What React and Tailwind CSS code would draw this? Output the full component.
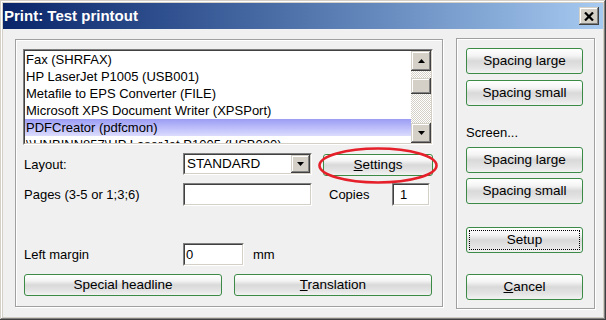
import React from 'react'

const printers = [
  'Fax (SHRFAX)',
  'HP LaserJet P1005 (USB001)',
  'Metafile to EPS Converter (FILE)',
  'Microsoft XPS Document Writer (XPSPort)',
  'PDFCreator (pdfcmon)',
  '\\\\UNBINN857\\HP LaserJet P1005 (USB000)',
]

function Btn({ children, className = '', focus }) {
  return (
    <div
      className={
        'relative flex items-center justify-center rounded-[3px] border border-[#3b8a45] bg-[linear-gradient(#ffffff_0%,#f4f4f4_28%,#d9d9d9_50%,#e4e4e4_78%,#f2f2f2_100%)] text-black text-[13.5px] ' +
        className
      }
    >
      {focus && <div className="absolute inset-[2px] border border-dotted border-black" />}
      <span className="relative">{children}</span>
    </div>
  )
}

function Sunken({ className = '', children }) {
  return (
    <div className={'flex border border-t-[#808080] border-l-[#808080] border-b-white border-r-white ' + className}>
      <div className="flex flex-1 min-w-0 border border-t-[#404040] border-l-[#404040] border-b-[#d4d0c8] border-r-[#d4d0c8] bg-white">
        {children}
      </div>
    </div>
  )
}

function Arrow({ down }) {
  return (
    <svg width="7" height="4" viewBox="0 0 7 4">
      <path d={down ? 'M0 0H7L3.5 4Z' : 'M0 4H7L3.5 0Z'} fill="#000" />
    </svg>
  )
}

const raised =
  'bg-[#d4d0c8] shadow-[inset_-1px_-1px_0_#404040,inset_1px_1px_0_#d4d0c8,inset_-2px_-2px_0_#808080,inset_2px_2px_0_#fff]'

export default function App() {
  return (
    <div className="w-[606px] h-[320px] overflow-hidden flex flex-col p-[3px] bg-[#d4d0c8] shadow-[inset_-1px_-1px_0_#404040,inset_1px_1px_0_#d4d0c8,inset_-2px_-2px_0_#808080,inset_2px_2px_0_#fff] font-['Liberation_Sans',Arial,sans-serif] text-[13px] text-black">
      {/* title bar */}
      <div className="h-[26px] shrink-0 flex items-center pl-[1px] pr-[4px] bg-gradient-to-r from-[#0a246a] to-[#a6caf0]">
        <span className="text-white font-bold text-[15px]">Print: Test printout</span>
        <div className={'ml-auto w-[20px] h-[18px] flex items-center justify-center ' + raised}>
          <svg width="10" height="9" viewBox="0 0 10 9">
            <path d="M1 0.5L9 8.5M9 0.5L1 8.5" stroke="#000" strokeWidth="2.2" />
          </svg>
        </div>
      </div>

      <div className="flex-1 flex bg-[#f0f0f0] pl-[12px] pr-[8px]">
        {/* left group */}
        <div className="mt-[10px] w-[428px] h-[268px] flex flex-col pl-[7px] pt-[9px] border border-[#a0a0a0] shadow-[inset_1px_1px_0_#fff,1px_1px_0_#fff]">
          <Sunken className="w-[410px] h-[96px]">
            <div className="flex-1 overflow-hidden">
              {printers.map((p, i) => (
                <div
                  key={p}
                  className={
                    'h-[17px] leading-[17px] pl-[1px] whitespace-nowrap ' +
                    (i === 4 ? 'bg-gradient-to-b from-[#9c9cf4] to-[#dcdcfd]' : '')
                  }
                >
                  {p}
                </div>
              ))}
            </div>
            <div className="w-[20px] flex flex-col bg-[repeating-conic-gradient(#ffffff_0_25%,#d4d0c8_0_50%)] bg-[length:2px_2px]">
              <div className={'h-[20px] flex items-center justify-center ' + raised}>
                <Arrow />
              </div>
              <div className={'mt-[7px] h-[16px] ' + raised} />
              <div className="flex-1" />
              <div className={'h-[20px] flex items-center justify-center ' + raised}>
                <Arrow down />
              </div>
            </div>
          </Sunken>

          <div className="mt-[8px] h-[23px] flex items-start">
            <div className="ml-[1px] w-[159px] leading-[24px]">Layout:</div>
            <Sunken className="w-[129px] h-[22px]">
              <div className="flex-1 pl-[2px] leading-[18px] text-[13.5px]">STANDARD</div>
              <div className={'w-[19px] flex items-center justify-center ' + raised}>
                <Arrow down />
              </div>
            </Sunken>
            <div className="relative ml-[11px] mt-[1px]">
              <Btn className="w-[110px] h-[22px]">
                <u>S</u>ettings
              </Btn>
              <svg className="absolute left-[-5px] top-[-7px] overflow-visible" width="120" height="37" viewBox="0 0 120 37">
                <ellipse cx="60" cy="18.5" rx="58.5" ry="17" fill="none" stroke="#e5202a" strokeWidth="2.6" />
              </svg>
            </div>
          </div>

          <div className="mt-[7px] h-[23px] flex items-start">
            <div className="ml-[1px] w-[159px] leading-[24px]">Pages (3-5 or 1;3;6)</div>
            <Sunken className="w-[129px] h-[23px]" />
            <div className="ml-[17px] w-[63px] leading-[24px]">Copies</div>
            <Sunken className="w-[38px] h-[23px]">
              <div className="pl-[6px] leading-[19px]">1</div>
            </Sunken>
          </div>

          <div className="mt-[37px] h-[23px] flex items-start">
            <div className="ml-[1px] w-[159px] leading-[24px]">Left margin</div>
            <Sunken className="w-[61px] h-[23px]">
              <div className="pl-[1px] leading-[19px]">0</div>
            </Sunken>
            <div className="ml-[9px] leading-[24px]">mm</div>
          </div>

          <div className="mt-[8px] ml-[1px] flex gap-[12px]">
            <Btn className="w-[198px] h-[22px]">Special headline</Btn>
            <Btn className="w-[198px] h-[22px]">
              <u>T</u>ranslation
            </Btn>
          </div>
        </div>

        {/* right group */}
        <div className="ml-[13px] mt-[9px] w-[139px] h-[271px] flex flex-col pl-[9px] pt-[9px] border border-[#a0a0a0] shadow-[inset_1px_1px_0_#fff,1px_1px_0_#fff]">
          <Btn className="w-[117px] h-[26px]">Spacing large</Btn>
          <Btn className="mt-[6px] w-[117px] h-[26px]">Spacing small</Btn>
          <div className="mt-[19px] h-[16px] leading-[16px]">Screen...</div>
          <Btn className="mt-[6px] w-[117px] h-[26px]">Spacing large</Btn>
          <Btn className="mt-[5px] w-[117px] h-[26px]">Spacing small</Btn>
          <Btn focus className="mt-[23px] w-[117px] h-[26px]">Setup</Btn>
          <Btn className="mt-[21px] w-[117px] h-[26px]">
            <u>C</u>ancel
          </Btn>
        </div>
      </div>
    </div>
  )
}
